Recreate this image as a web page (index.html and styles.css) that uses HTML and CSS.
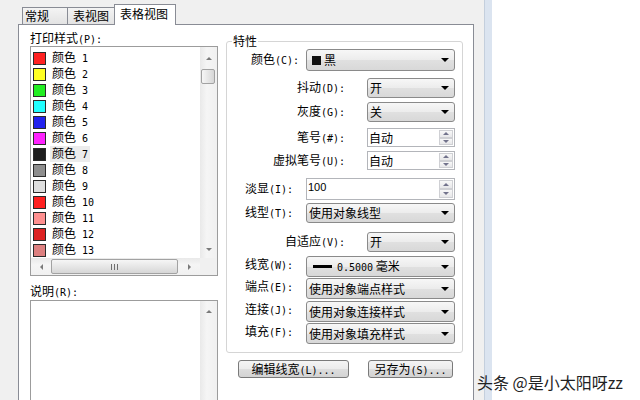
FILE: index.html
```
<!DOCTYPE html>
<html lang="zh">
<head>
<meta charset="utf-8">
<title>打印样式表编辑器</title>
<link rel="stylesheet" href="styles.css">
</head>
<body>
<div class="screen">
  <div class="dialog">
    <div class="tabs">
      <div class="tab t1">常规</div>
      <div class="tab t2">表视图</div>
      <div class="tab t3">表格视图</div>
    </div>
    <div class="panel">
      <div class="leftcol">
        <div class="lbl">打印样式<span class="k">(P):</span></div>
        <div class="listbox">
          <div class="listmain">
            <div class="items">
              <div class="item"><span class="sw" style="background:#ff2222"></span><span class="name">颜色<span class="k num">1</span></span></div>
              <div class="item"><span class="sw" style="background:#ffff22"></span><span class="name">颜色<span class="k num">2</span></span></div>
              <div class="item"><span class="sw" style="background:#22ee22"></span><span class="name">颜色<span class="k num">3</span></span></div>
              <div class="item"><span class="sw" style="background:#22ffff"></span><span class="name">颜色<span class="k num">4</span></span></div>
              <div class="item"><span class="sw" style="background:#2222ee"></span><span class="name">颜色<span class="k num">5</span></span></div>
              <div class="item"><span class="sw" style="background:#ff22ff"></span><span class="name">颜色<span class="k num">6</span></span></div>
              <div class="item sel"><span class="sw" style="background:#1e1e1e"></span><span class="name">颜色<span class="k num">7</span></span></div>
              <div class="item"><span class="sw" style="background:#8e8e8e"></span><span class="name">颜色<span class="k num">8</span></span></div>
              <div class="item"><span class="sw" style="background:#dedede"></span><span class="name">颜色<span class="k num">9</span></span></div>
              <div class="item"><span class="sw" style="background:#ff2020"></span><span class="name">颜色<span class="k num">10</span></span></div>
              <div class="item"><span class="sw" style="background:#ff9090"></span><span class="name">颜色<span class="k num">11</span></span></div>
              <div class="item"><span class="sw" style="background:#dd2222"></span><span class="name">颜色<span class="k num">12</span></span></div>
              <div class="item"><span class="sw" style="background:#dd8080"></span><span class="name">颜色<span class="k num">13</span></span></div>
            </div>
            <div class="vscroll">
              <div class="vbtn up-box"><span class="tri-up"></span></div>
              <div class="vthumb"></div>
              <div class="vtrack"></div>
              <div class="vbtn down-box"><span class="tri-down"></span></div>
            </div>
          </div>
          <div class="hscroll">
            <div class="hbtn hleft"><span class="tri-left"></span></div>
            <div class="hthumb"><span class="grip"></span></div>
            <div class="hbtn hright"><span class="tri-right"></span></div>
            <div class="corner"></div>
          </div>
        </div>
        <div class="lbl desc-lbl">说明<span class="k">(R):</span></div>
        <div class="descbox">
          <div class="desc-text"></div>
          <div class="vscroll">
            <div class="vbtn desc-up"><span class="tri-up"></span></div>
            <div class="vtrack"></div>
          </div>
        </div>
      </div>
      <div class="rightcol">
        <div class="group">
          <div class="legend">特性</div>
          <div class="row r1 wide">
            <span class="plabel">颜色<span class="k">(C):</span></span>
            <div class="combo h22"><span class="blk"></span><span class="ctext">黑</span><span class="caret"></span></div>
          </div>
          <div class="row r2 narrow">
            <span class="plabel">抖动<span class="k">(D):</span></span>
            <div class="combo h20"><span class="ctext">开</span><span class="caret"></span></div>
          </div>
          <div class="row r3 narrow">
            <span class="plabel">灰度<span class="k">(G):</span></span>
            <div class="combo h20"><span class="ctext">关</span><span class="caret"></span></div>
          </div>
          <div class="row r4 narrow">
            <span class="plabel">笔号<span class="k">(#):</span></span>
            <div class="spin h19"><span class="stext">自动</span><span class="sbtns"><span class="sb"><span class="s-up"></span></span><span class="sb"><span class="s-down"></span></span></span></div>
          </div>
          <div class="row r5 narrow">
            <span class="plabel">虚拟笔号<span class="k">(U):</span></span>
            <div class="spin h19"><span class="stext">自动</span><span class="sbtns"><span class="sb"><span class="s-up"></span></span><span class="sb"><span class="s-down"></span></span></span></div>
          </div>
          <div class="row r6 wide left">
            <span class="plabel">淡显<span class="k">(I):</span></span>
            <div class="spin h22 top"><span class="stext num-text">100</span><span class="sbtns"><span class="sb"><span class="s-up"></span></span><span class="sb"><span class="s-down"></span></span></span></div>
          </div>
          <div class="row r7 wide left">
            <span class="plabel">线型<span class="k">(T):</span></span>
            <div class="combo h20"><span class="ctext">使用对象线型</span><span class="caret"></span></div>
          </div>
          <div class="row r8 narrow">
            <span class="plabel">自适应<span class="k">(V):</span></span>
            <div class="combo h20"><span class="ctext">开</span><span class="caret"></span></div>
          </div>
          <div class="row r9 wide left up">
            <span class="plabel">线宽<span class="k">(W):</span></span>
            <div class="combo h21"><span class="lw"></span><span class="ctext"><span class="k">0.5000</span>&nbsp;毫米</span><span class="caret"></span></div>
          </div>
          <div class="row r10 wide left up">
            <span class="plabel">端点<span class="k">(E):</span></span>
            <div class="combo h21"><span class="ctext">使用对象端点样式</span><span class="caret"></span></div>
          </div>
          <div class="row r11 wide left up">
            <span class="plabel">连接<span class="k">(J):</span></span>
            <div class="combo h21"><span class="ctext">使用对象连接样式</span><span class="caret"></span></div>
          </div>
          <div class="row r12 wide left up">
            <span class="plabel">填充<span class="k">(F):</span></span>
            <div class="combo h21"><span class="ctext">使用对象填充样式</span><span class="caret"></span></div>
          </div>
        </div>
        <div class="buttons">
          <div class="btn b1">编辑线宽<span class="k">(L)...</span></div>
          <div class="btn b2">另存为<span class="k">(S)...</span></div>
        </div>
      </div>
    </div>
  </div>
  <div class="stripe"></div>
  <div class="blank"></div>
  <div class="watermark">头条 @是小太阳呀zz</div>
</div>
</body>
</html>
```
FILE: styles.css
```
html, body {
  margin: 0;
  padding: 0;
  background: #fff;
}
body {
  font-family: "Noto Sans CJK SC", "Liberation Sans", sans-serif;
  font-size: 12px;
  color: #000;
}
.screen {
  width: 640px;
  height: 400px;
  display: flex;
  overflow: hidden;
  position: relative;
  background: #fff;
}
.dialog {
  width: 484px;
  flex: none;
  box-sizing: border-box;
  padding-left: 18px;
  background: #f0f0f0;
}
.k {
  font-family: "DejaVu Sans Mono", "Liberation Mono", monospace;
  font-size: 10px;
}

/* tabs */
.tabs {
  height: 24px;
  display: flex;
  align-items: flex-end;
  padding-left: 4px;
  position: relative;
  z-index: 2;
}
.tab {
  box-sizing: border-box;
  height: 17px;
  border: 1px solid #898c95;
  border-bottom: none;
  background: linear-gradient(#f4f4f4, #e3e3e3);
  line-height: 15px;
  padding-left: 5px;
  white-space: nowrap;
}
.t1 { width: 46px; padding-left: 2px; }
.t2 { width: 48px; margin-left: -1px; }
.t3 {
  width: 62px;
  margin-left: -1px;
  height: 21px;
  margin-bottom: -1px;
  background: #fff;
  line-height: 17px;
}

/* panel */
.panel {
  width: 456px;
  height: 390px;
  box-sizing: border-box;
  border: 1px solid #898c95;
  background: #fff;
  display: flex;
  padding: 0 10px 0 11px;
  position: relative;
  z-index: 1;
}
.leftcol {
  width: 188px;
  flex: none;
  padding-top: 6px;
}
.lbl {
  height: 14px;
  line-height: 14px;
  white-space: nowrap;
}
.listbox {
  margin-top: 1px;
  height: 230px;
  box-sizing: border-box;
  border: 1px solid #9c9c9c;
  display: flex;
  flex-direction: column;
}
.listmain {
  flex: 1;
  display: flex;
  min-height: 0;
}
.items {
  flex: 1;
  padding-top: 3px;
}
.item {
  height: 16px;
  display: flex;
  align-items: center;
  padding-left: 2px;
}
.sw {
  width: 13px;
  height: 13px;
  box-sizing: border-box;
  border: 1px solid #2b2b2b;
  flex: none;
}
.name {
  margin-left: 6px;
  line-height: 14px;
  white-space: nowrap;
}
.num { margin-left: 6px; }
.sel .name {
  background: #ececec;
  margin-left: 4px;
  padding: 0 2px;
}

/* scrollbars */
.vscroll {
  width: 17px;
  flex: none;
  display: flex;
  flex-direction: column;
  background: linear-gradient(to right, #e9e9e9, #f5f5f5 40%, #f0f0f0);
}
.vbtn {
  display: flex;
  align-items: center;
  justify-content: center;
  flex: none;
}
.up-box { height: 22px; }
.down-box { height: 17px; }
.desc-up { height: 21px; }
.vthumb {
  height: 15px;
  width: 14px;
  margin-left: 1px;
  box-sizing: border-box;
  border: 1px solid #a2a2a2;
  border-radius: 2px;
  background: linear-gradient(to right, #f6f6f6, #e3e3e3 60%, #d6d6d6);
  flex: none;
}
.vtrack { flex: 1; }
.tri-up {
  width: 0; height: 0;
  border-left: 3px solid transparent;
  border-right: 3px solid transparent;
  border-bottom: 3px solid #7a7a7a;
}
.tri-down {
  width: 0; height: 0;
  border-left: 3px solid transparent;
  border-right: 3px solid transparent;
  border-top: 3px solid #7a7a7a;
}
.tri-left {
  width: 0; height: 0;
  border-top: 3px solid transparent;
  border-bottom: 3px solid transparent;
  border-right: 3px solid #7a7a7a;
}
.tri-right {
  width: 0; height: 0;
  border-top: 3px solid transparent;
  border-bottom: 3px solid transparent;
  border-left: 3px solid #7a7a7a;
}
.hscroll {
  height: 17px;
  flex: none;
  display: flex;
  background: linear-gradient(#e9e9e9, #f5f5f5 40%, #f0f0f0);
}
.hbtn {
  display: flex;
  align-items: center;
  justify-content: center;
}
.hleft { width: 20px; }
.hright { width: 22px; }
.hthumb {
  width: 127px;
  height: 15px;
  margin-top: 1px;
  box-sizing: border-box;
  border: 1px solid #a2a2a2;
  border-radius: 2px;
  background: linear-gradient(#f6f6f6, #e3e3e3 60%, #d6d6d6);
  display: flex;
  align-items: center;
  justify-content: center;
}
.grip {
  width: 7px;
  height: 6px;
  background: repeating-linear-gradient(to right, #6f6f6f 0 1px, transparent 1px 3px);
}
.corner {
  width: 17px;
  background: #f0f0f0;
}
.desc-lbl { margin-top: 8px; }
.descbox {
  margin-top: 2px;
  height: 120px;
  box-sizing: border-box;
  border: 1px solid #9c9c9c;
  display: flex;
}
.desc-text { flex: 1; }

/* right column */
.rightcol {
  width: 237px;
  flex: none;
  margin-left: 8px;
  padding-top: 16px;
}
.group {
  position: relative;
  border: 1px solid #d5d5d5;
  border-radius: 3px;
  padding: 7px 7px 8px 0;
  display: flex;
  flex-direction: column;
}
.legend {
  position: absolute;
  top: -8px;
  left: 5px;
  padding: 0 1px;
  line-height: 14px;
  background: #fff;
}
.row {
  display: flex;
  align-items: center;
  justify-content: flex-end;
}
.plabel {
  white-space: nowrap;
  line-height: 14px;
}
.wide .combo, .wide .spin { width: 149px; }
.narrow .combo, .narrow .spin { width: 88px; }
.narrow .plabel { margin-right: 22px; }
.r1 .plabel { margin-right: 7px; }
.left { padding-left: 18px; }
.left .plabel { flex: 1; }
.up .plabel { margin-bottom: 4px; }
.r2 { margin-top: 7px; }
.r3 { margin-top: 4px; }
.r4 { margin-top: 6px; }
.r5 { margin-top: 4px; }
.r6 { margin-top: 8px; }
.r7 { margin-top: 3px; }
.r8 { margin-top: 9px; }
.r9 { margin-top: 4px; }
.r10 { margin-top: 1px; }
.r11 { margin-top: 2px; }
.r12 { margin-top: 1px; }
.h19 { height: 19px; }
.h20 { height: 20px; }
.h21 { height: 21px; }
.h22 { height: 22px; }

.combo {
  flex: none;
  box-sizing: border-box;
  border: 1px solid #8a8a8a;
  border-radius: 3px;
  background: linear-gradient(#f7f7f7, #ececec 50%, #e0e0e0 52%, #d8d8d8);
  display: flex;
  align-items: center;
  padding-left: 2px;
}
.ctext {
  line-height: 14px;
  white-space: nowrap;
}
.caret {
  margin-left: auto;
  margin-right: 5px;
  width: 0; height: 0;
  border-left: 4px solid transparent;
  border-right: 4px solid transparent;
  border-top: 4px solid #000;
}
.blk {
  width: 9px;
  height: 9px;
  background: #111;
  margin-left: 3px;
  margin-right: 3px;
}
.lw {
  width: 19px;
  height: 3px;
  background: #000;
  margin-left: 4px;
  margin-right: 5px;
}

.spin {
  flex: none;
  box-sizing: border-box;
  border: 1px solid #b3b5ba;
  background: #fff;
  display: flex;
  align-items: center;
  padding-left: 1px;
}
.spin.top { align-items: flex-start; }
.stext {
  flex: 1;
  line-height: 14px;
}
.num-text {
  font-family: "Liberation Sans", sans-serif;
  font-size: 11px;
  padding-top: 1px;
}
.sbtns {
  width: 14px;
  align-self: stretch;
  margin: 1px;
  display: flex;
  flex-direction: column;
}
.sb {
  flex: 1;
  box-sizing: border-box;
  border: 1px solid #cfd0d4;
  background: linear-gradient(#f8f8f8, #e7e7e9);
  display: flex;
  align-items: center;
  justify-content: center;
}
.s-up {
  width: 0; height: 0;
  border-left: 3px solid transparent;
  border-right: 3px solid transparent;
  border-bottom: 3px solid #72738c;
}
.s-down {
  width: 0; height: 0;
  border-left: 3px solid transparent;
  border-right: 3px solid transparent;
  border-top: 3px solid #72738c;
}

.buttons {
  display: flex;
  gap: 19px;
  margin-top: 7px;
  padding-left: 12px;
}
.btn {
  height: 18px;
  box-sizing: border-box;
  border: 1px solid #7a7a7a;
  border-radius: 3px;
  background: linear-gradient(#f4f4f4, #ebebeb 50%, #dddddd 52%, #d3d3d3);
  line-height: 16px;
  text-align: center;
  white-space: nowrap;
}
.b1 { width: 111px; }
.b2 { width: 85px; }

/* right side */
.stripe {
  width: 8px;
  flex: none;
  box-sizing: border-box;
  border-left: 1px solid #c4cfdd;
  background: #dbe4f0;
}
.blank {
  flex: 1;
  background: #fff;
}
.watermark {
  position: absolute;
  left: 477px;
  top: 372px;
  font-size: 16px;
  line-height: 20px;
  color: #222;
  white-space: nowrap;
}
```
